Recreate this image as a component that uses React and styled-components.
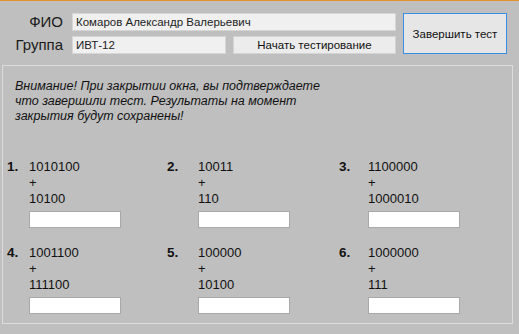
import styled, { createGlobalStyle } from "styled-components";

const GlobalStyle = createGlobalStyle`
  html, body {
    margin: 0;
    padding: 0;
    background: #bfbfbf;
  }
  body {
    font-family: "Liberation Sans", Arial, sans-serif;
    color: #111;
  }
`;

const problems = [
  { n: 1, a: "1010100", b: "10100" },
  { n: 2, a: "10011", b: "110" },
  { n: 3, a: "1100000", b: "1000010" },
  { n: 4, a: "1001100", b: "111100" },
  { n: 5, a: "100000", b: "10100" },
  { n: 6, a: "1000000", b: "111" },
];

// width of the number cell differs per column, as in the original form
const numWidths = [22, 31, 29];

export default function App() {
  return (
    <>
      <GlobalStyle />
      <Window>
        <Header>
          <Label>ФИО</Label>
          <ReadOnlyField $span value="Комаров Александр Валерьевич" readOnly />
          <FinishButton>Завершить тест</FinishButton>
          <Label>Группа</Label>
          <ReadOnlyField value="ИВТ-12" readOnly />
          <StartButton>Начать тестирование</StartButton>
        </Header>

        <GroupBox>
          <Warning>
            Внимание! При закрытии окна, вы подтверждаете
            <br />
            что завершили тест. Результаты на момент
            <br />
            закрытия будут сохранены!
          </Warning>

          <Tasks>
            {problems.map((p, i) => (
              <Task key={p.n} $numW={numWidths[i % 3]}>
                <Num>{p.n}.</Num>
                <Body>
                  <Line>{p.a}</Line>
                  <Line>+</Line>
                  <Line>{p.b}</Line>
                  <Answer />
                </Body>
              </Task>
            ))}
          </Tasks>
        </GroupBox>
      </Window>
    </>
  );
}

const Window = styled.div`
  width: 519px;
  height: 334px;
  box-sizing: border-box;
  border-top: 1px solid #e3922c;
  background: #bfbfbf;
  overflow: hidden;
`;

const Header = styled.div`
  display: grid;
  grid-template-columns: 56px 154px 163px 104px;
  grid-template-rows: 18px 18px;
  column-gap: 7px;
  row-gap: 5px;
  padding: 12px 0 0 9px;
`;

const Label = styled.div`
  font-size: 15px;
  line-height: 18px;
  text-align: right;
  color: #1a1a1a;
  margin-right: 2px;
`;

const ReadOnlyField = styled.input`
  grid-column: ${(p) => (p.$span ? "2 / span 2" : "auto")};
  box-sizing: border-box;
  height: 18px;
  margin: 0;
  padding: 0 3px;
  border: 1px solid #d6d6d6;
  background: #f0f0f0;
  font-family: "Liberation Sans", Arial, sans-serif;
  font-size: 11.5px;
  color: #222;
  outline: none;
`;

const StartButton = styled.button`
  box-sizing: border-box;
  height: 18px;
  margin: 0;
  padding: 0;
  border: 1px solid #d4d4d4;
  background: #ececec;
  font-family: "Liberation Sans", Arial, sans-serif;
  font-size: 11.5px;
  color: #111;
`;

const FinishButton = styled.button`
  grid-column: 4;
  grid-row: 1 / span 2;
  box-sizing: border-box;
  height: 41px;
  margin: 0;
  padding: 0;
  border: 1px solid #3a8ee6;
  background: #e6e6e6;
  font-family: "Liberation Sans", Arial, sans-serif;
  font-size: 11.5px;
  color: #111;
`;

const GroupBox = styled.div`
  box-sizing: border-box;
  width: 511px;
  height: 259px;
  margin: 11px 0 0 2px;
  border: 1px solid #dcdcdc;
  padding: 13px 0 0 12px;
`;

const Warning = styled.p`
  margin: 0;
  font-size: 12.5px;
  font-style: italic;
  line-height: 15px;
  color: #111;
`;

const Tasks = styled.div`
  display: grid;
  grid-template-columns: 160px 172px 160px;
  row-gap: 17px;
  margin: 35px 0 0 -8px;
`;

const Task = styled.div`
  display: grid;
  grid-template-columns: ${(p) => p.$numW}px 1fr;
  align-items: start;
`;

const Num = styled.div`
  font-size: 13.5px;
  font-weight: bold;
  line-height: 16px;
`;

const Body = styled.div`
  display: flex;
  flex-direction: column;
`;

const Line = styled.div`
  font-size: 13px;
  line-height: 16px;
`;

const Answer = styled.input`
  box-sizing: border-box;
  width: 92px;
  height: 17px;
  margin: 4px 0 0 0;
  padding: 0 2px;
  border: 1px solid #a9a9a9;
  background: #fff;
  outline: none;
`;
